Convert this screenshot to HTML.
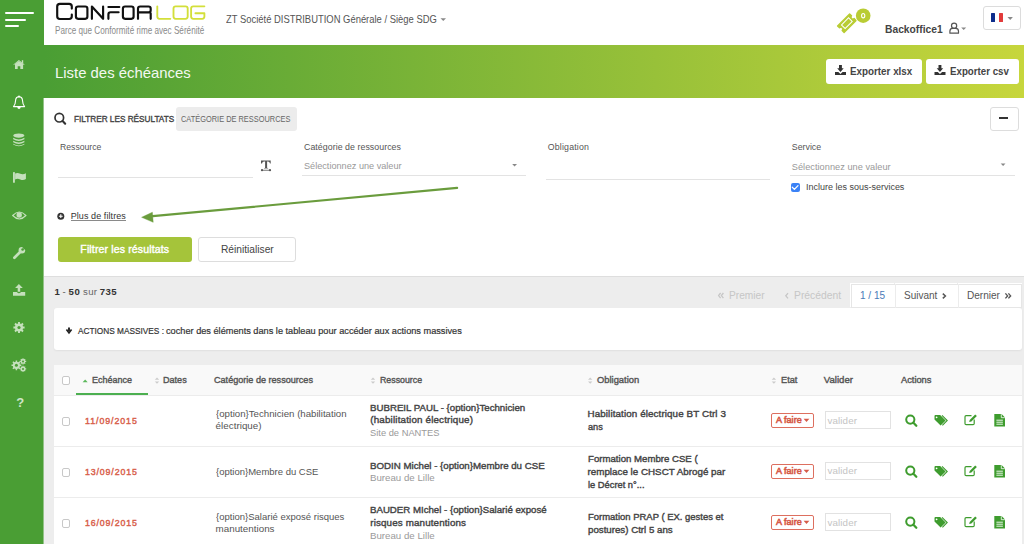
<!DOCTYPE html>
<html><head><meta charset="utf-8"><title>Liste des échéances</title>
<style>
html,body{margin:0;padding:0;width:1024px;height:544px;overflow:hidden;background:#ededed}
body{position:relative;font-family:"Liberation Sans",sans-serif}
.t{position:absolute;white-space:nowrap}
.r{position:absolute}
svg{position:absolute;overflow:visible}
</style></head><body>
<div class="r" style="left:0px;top:0px;width:1024px;height:544px;background:#ededed"></div>
<div class="r" style="left:44px;top:0px;width:980px;height:45px;background:#fff"></div>
<div class="r" style="left:0px;top:45px;width:1024px;height:53px;background:linear-gradient(90deg,#4a9e34 0px,#4a9e34 44px,#c7d63c 1024px)"></div>
<div class="r" style="left:0px;top:0px;width:43px;height:544px;background:#4a9e34"></div>
<div class="r" style="left:43px;top:0px;width:1px;height:98px;background:#4a9e34"></div>
<div class="r" style="left:43px;top:98px;width:1px;height:446px;background:rgba(74,158,52,0.55)"></div>
<div class="r" style="left:44px;top:45px;width:980px;height:53px;background:linear-gradient(90deg,#4a9e34 0%,#c7d63c 100%)"></div>
<div class="r" style="left:44px;top:98px;width:980px;height:178px;background:#fff"></div>
<div class="r" style="left:44px;top:276px;width:980px;height:1px;background:#dedede"></div>
<div class="r" style="left:850px;top:283px;width:172px;height:24px;background:#fff"></div>
<div class="r" style="left:894px;top:283px;width:1px;height:24px;background:#ececec"></div>
<div class="r" style="left:957px;top:283px;width:1px;height:24px;background:#ececec"></div>
<div class="r" style="left:54px;top:308px;width:968px;height:42px;background:#fff;border-radius:3px;box-shadow:0 1px 2px rgba(0,0,0,0.06)"></div>
<div class="r" style="left:54px;top:365px;width:968px;height:179px;background:#fff"></div>
<div class="r" style="left:54px;top:365px;width:968px;height:30px;background:#f9f9f9"></div>
<div class="r" style="left:54px;top:395px;width:968px;height:1px;background:#ececec"></div>
<div class="r" style="left:54px;top:446px;width:968px;height:1px;background:#ececec"></div>
<div class="r" style="left:54px;top:497px;width:968px;height:1px;background:#ececec"></div>
<div class="r" style="left:76px;top:393px;width:72px;height:2px;background:#4caf50"></div>
<div class="r" style="left:4.5px;top:12px;width:29.0px;height:2px;background:#fff;border-radius:1px"></div>
<div class="r" style="left:4.5px;top:18.5px;width:21.5px;height:2.0px;background:#fff;border-radius:1px"></div>
<div class="r" style="left:4.5px;top:24.5px;width:14.5px;height:2.0px;background:#fff;border-radius:1px"></div>
<div class="t" style="left:226.00px;top:14px;font-size:10.4px;line-height:11px;color:#555;transform:scaleX(0.9066);transform-origin:0 0;">ZT Société DISTRIBUTION Générale / Siège SDG</div>
<div class="t" style="left:885.00px;top:24px;font-size:10.4px;line-height:11px;color:#444;font-weight:700;transform:scaleX(0.9883);transform-origin:0 0;">Backoffice1</div>
<div class="t" style="left:54.60px;top:64px;font-size:15px;line-height:17px;color:#f3f8f0;transform:scaleX(0.9923);transform-origin:0 0;">Liste des échéances</div>
<div class="r" style="left:826px;top:59px;width:96px;height:25px;background:#fff;border-radius:3px"></div>
<div class="r" style="left:926px;top:59px;width:93px;height:25px;background:#fff;border-radius:3px"></div>
<div class="t" style="left:850.00px;top:65px;font-size:10.6px;line-height:12px;color:#444;font-weight:700;transform:scaleX(0.9276);transform-origin:0 0;">Exporter xlsx</div>
<div class="t" style="left:950.00px;top:65px;font-size:10.6px;line-height:12px;color:#444;font-weight:700;transform:scaleX(0.9171);transform-origin:0 0;">Exporter csv</div>
<div class="t" style="left:73.60px;top:113px;font-size:9.6px;line-height:11px;color:#444;transform:scaleX(0.8551);transform-origin:0 0;-webkit-text-stroke:0.4px #444;">FILTRER LES RÉSULTATS</div>
<div class="r" style="left:176px;top:107px;width:121px;height:24px;background:#ececec;border-radius:3px"></div>
<div class="t" style="left:181.30px;top:114px;font-size:9.0px;line-height:10px;color:#666;transform:scaleX(0.8234);transform-origin:0 0;">CATÉGORIE DE RESSOURCES</div>
<div class="r" style="left:990px;top:107px;width:29px;height:24px;background:#fff;border:1px solid #ddd;border-radius:3px;box-sizing:border-box"></div>
<div class="r" style="left:999px;top:116.5px;width:9px;height:2.0px;background:#333"></div>
<div class="t" style="left:59.70px;top:142px;font-size:8.8px;line-height:10px;color:#555;transform:scaleX(0.9842);transform-origin:0 0;">Ressource</div>
<div class="r" style="left:58px;top:177px;width:195px;height:1px;background:#e3e3e3"></div>
<div class="t" style="left:304.00px;top:142px;font-size:8.8px;line-height:10px;color:#555;letter-spacing:0.051px;">Catégorie de ressources</div>
<div class="t" style="left:304.00px;top:161px;font-size:9.2px;line-height:10px;color:#999;transform:scaleX(0.9949);transform-origin:0 0;">Sélectionnez une valeur</div>
<div class="r" style="left:302px;top:174.5px;width:224px;height:1.0px;background:#e3e3e3"></div>
<div class="t" style="left:547.80px;top:142px;font-size:8.8px;line-height:10px;color:#555;letter-spacing:0.164px;">Obligation</div>
<div class="r" style="left:546px;top:179px;width:224px;height:1px;background:#e3e3e3"></div>
<div class="t" style="left:791.80px;top:142px;font-size:8.8px;line-height:10px;color:#555;">Service</div>
<div class="t" style="left:791.80px;top:162px;font-size:9.2px;line-height:10px;color:#999;letter-spacing:0.036px;">Sélectionnez une valeur</div>
<div class="r" style="left:790px;top:174.5px;width:225px;height:1.0px;background:#e3e3e3"></div>
<div class="r" style="left:790.5px;top:183px;width:9.0px;height:9px;background:#3b82f6;border-radius:2px"></div>
<div class="t" style="left:805.50px;top:182px;font-size:9.2px;line-height:10px;color:#444;transform:scaleX(0.9779);transform-origin:0 0;">Inclure les sous-services</div>
<div class="t" style="left:70.70px;top:211px;font-size:9.0px;line-height:10px;color:#333;letter-spacing:0.077px;">Plus de filtres</div>
<div class="r" style="left:70.5px;top:220px;width:55.5px;height:1px;background:#8a8a8a"></div>
<div class="r" style="left:58px;top:237px;width:134px;height:25px;background:#a5c43a;border-radius:3px"></div>
<div class="t" style="left:80.30px;top:243px;font-size:10.6px;line-height:12px;color:#fff;letter-spacing:0.115px;-webkit-text-stroke:0.4px #fff;">Filtrer les résultats</div>
<div class="r" style="left:198px;top:237px;width:98px;height:25px;background:#fff;border:1px solid #ddd;border-radius:3px;box-sizing:border-box"></div>
<div class="t" style="left:220.50px;top:243px;font-size:10.6px;line-height:12px;color:#444;transform:scaleX(0.9637);transform-origin:0 0;">Réinitialiser</div>
<div class="t" style="left:54.60px;top:286px;font-size:9.6px;line-height:11px;color:#333;font-weight:700;">1</div>
<div class="t" style="left:62.50px;top:286px;font-size:9.6px;line-height:11px;color:#555;">-</div>
<div class="t" style="left:68.60px;top:286px;font-size:9.6px;line-height:11px;color:#333;font-weight:700;letter-spacing:0.525px;">50</div>
<div class="t" style="left:83.00px;top:286px;font-size:9.6px;line-height:11px;color:#666;letter-spacing:0.333px;">sur</div>
<div class="t" style="left:99.80px;top:286px;font-size:9.6px;line-height:11px;color:#333;font-weight:700;letter-spacing:0.394px;">735</div>
<div class="r" style="left:851px;top:283.5px;width:171px;height:24.0px;background:#fff;border:1px solid #e6e6e6;box-sizing:border-box"></div>
<div class="r" style="left:894.5px;top:283.5px;width:1.0px;height:24.0px;background:#ececec"></div>
<div class="r" style="left:957.5px;top:283.5px;width:1.0px;height:24.0px;background:#ececec"></div>
<div class="t" style="left:728.60px;top:290px;font-size:10.4px;line-height:11px;color:#c6c6c6;transform:scaleX(0.9777);transform-origin:0 0;">Premier</div>
<div class="t" style="left:793.90px;top:290px;font-size:10.4px;line-height:11px;color:#c6c6c6;transform:scaleX(0.9955);transform-origin:0 0;">Précédent</div>
<div class="t" style="left:859.80px;top:290px;font-size:10.4px;line-height:11px;color:#4a7ab8;transform:scaleX(0.9646);transform-origin:0 0;">1 / 15</div>
<div class="t" style="left:903.50px;top:290px;font-size:10.4px;line-height:11px;color:#555;transform:scaleX(0.9630);transform-origin:0 0;">Suivant</div>
<div class="t" style="left:967.00px;top:290px;font-size:10.4px;line-height:11px;color:#555;transform:scaleX(0.9677);transform-origin:0 0;">Dernier</div>
<svg style="left:700px;top:280px" width="324" height="30" viewBox="700 280 324 30">
<g fill="none" stroke-width="1.3" stroke-linejoin="miter">
<path d="M720.6 293 L718.6 295.6 L720.6 298.2 M723.4 293 L721.4 295.6 L723.4 298.2" stroke="#c6c6c6"/>
<path d="M788 293.2 L785.8 295.8 L788 298.4" stroke="#c6c6c6"/>
<path d="M942.8 293.6 L945.4 296 L942.8 298.4" stroke="#555" stroke-width="1.5"/>
<path d="M1005.4 293.4 L1007.6 295.9 L1005.4 298.4 M1008.4 293.4 L1010.6 295.9 L1008.4 298.4" stroke="#555" stroke-width="1.4"/>
</g>
</svg>
<div class="t" style="left:77.50px;top:325px;font-size:9.6px;line-height:11px;color:#333;transform:scaleX(0.8621);transform-origin:0 0;-webkit-text-stroke:0.2px #333;">ACTIONS MASSIVES :</div>
<div class="t" style="left:166.40px;top:325px;font-size:9.6px;line-height:11px;color:#333;transform:scaleX(0.9580);transform-origin:0 0;-webkit-text-stroke:0.2px #333;">cocher des éléments dans le tableau pour accéder aux actions massives</div>
<div class="r" style="left:61.5px;top:375.5px;width:8.5px;height:9.0px;background:#fff;border:1px solid #c8c8c8;border-radius:2px;box-sizing:border-box"></div>
<div class="t" style="left:92.20px;top:374px;font-size:9.6px;line-height:11px;color:#555;transform:scaleX(0.9344);transform-origin:0 0;-webkit-text-stroke:0.4px #555;">Echéance</div>
<div class="t" style="left:163.30px;top:374px;font-size:9.6px;line-height:11px;color:#555;transform:scaleX(0.9452);transform-origin:0 0;-webkit-text-stroke:0.4px #555;">Dates</div>
<div class="t" style="left:214.00px;top:374px;font-size:9.6px;line-height:11px;color:#555;transform:scaleX(0.9465);transform-origin:0 0;-webkit-text-stroke:0.4px #555;">Catégorie de ressources</div>
<div class="t" style="left:380.30px;top:374px;font-size:9.6px;line-height:11px;color:#555;transform:scaleX(0.9175);transform-origin:0 0;-webkit-text-stroke:0.4px #555;">Ressource</div>
<div class="t" style="left:597.10px;top:374px;font-size:9.6px;line-height:11px;color:#555;transform:scaleX(0.9762);transform-origin:0 0;-webkit-text-stroke:0.4px #555;">Obligation</div>
<div class="t" style="left:780.70px;top:374px;font-size:9.6px;line-height:11px;color:#555;transform:scaleX(0.9603);transform-origin:0 0;-webkit-text-stroke:0.4px #555;">Etat</div>
<div class="t" style="left:823.70px;top:374px;font-size:9.6px;line-height:11px;color:#555;letter-spacing:0.021px;-webkit-text-stroke:0.4px #555;">Valider</div>
<div class="t" style="left:900.60px;top:374px;font-size:9.6px;line-height:11px;color:#555;transform:scaleX(0.9657);transform-origin:0 0;-webkit-text-stroke:0.4px #555;">Actions</div>
<div class="r" style="left:61.5px;top:417px;width:8.5px;height:8.5px;background:#fff;border:1px solid #c8c8c8;border-radius:2px;box-sizing:border-box"></div>
<div class="t" style="left:85.00px;top:416px;font-size:8.8px;line-height:10px;color:#d8604b;letter-spacing:0.934px;-webkit-text-stroke:0.4px #d8604b;">11/09/2015</div>
<div class="t" style="left:215.60px;top:408px;font-size:9.8px;line-height:11px;color:#555;transform:scaleX(0.9864);transform-origin:0 0;">{option}Technicien (habilitation</div>
<div class="t" style="left:215.60px;top:420px;font-size:9.8px;line-height:11px;color:#555;letter-spacing:0.024px;">électrique)</div>
<div class="t" style="left:370.30px;top:402px;font-size:9.8px;line-height:11px;color:#444;transform:scaleX(0.9881);transform-origin:0 0;-webkit-text-stroke:0.4px #444;">BUBREIL PAUL - {option}Technicien</div>
<div class="t" style="left:370.30px;top:414px;font-size:9.8px;line-height:11px;color:#444;letter-spacing:0.171px;-webkit-text-stroke:0.4px #444;">(habilitation électrique)</div>
<div class="t" style="left:370.30px;top:427px;font-size:9.8px;line-height:11px;color:#9a9a9a;transform:scaleX(0.9523);transform-origin:0 0;">Site de NANTES</div>
<div class="t" style="left:587.50px;top:408px;font-size:9.8px;line-height:11px;color:#444;letter-spacing:0.112px;-webkit-text-stroke:0.4px #444;">Habilitation électrique BT Ctrl 3</div>
<div class="t" style="left:587.50px;top:421px;font-size:9.8px;line-height:11px;color:#444;transform:scaleX(0.9369);transform-origin:0 0;-webkit-text-stroke:0.4px #444;">ans</div>
<div class="r" style="left:771px;top:413px;width:43px;height:15px;background:#fff;border:1px solid #dd6f5f;border-radius:2px;box-sizing:border-box"></div>
<div class="t" style="left:775.50px;top:414px;font-size:9.6px;line-height:11px;color:#d65a48;transform:scaleX(0.9443);transform-origin:0 0;-webkit-text-stroke:0.6px #d65a48;">A faire</div>
<div class="r" style="left:825px;top:411px;width:66px;height:18px;background:#fff;border:1px solid #e2e2e2;box-sizing:border-box"></div>
<div class="t" style="left:827.50px;top:415px;font-size:9.8px;line-height:11px;color:#c4c4c4;letter-spacing:0.105px;">valider</div>
<div class="r" style="left:61.5px;top:468px;width:8.5px;height:8.5px;background:#fff;border:1px solid #c8c8c8;border-radius:2px;box-sizing:border-box"></div>
<div class="t" style="left:85.00px;top:467px;font-size:8.8px;line-height:10px;color:#d8604b;letter-spacing:0.862px;-webkit-text-stroke:0.4px #d8604b;">13/09/2015</div>
<div class="t" style="left:215.60px;top:466px;font-size:9.8px;line-height:11px;color:#555;transform:scaleX(0.9689);transform-origin:0 0;">{option}Membre du CSE</div>
<div class="t" style="left:370.30px;top:460px;font-size:9.8px;line-height:11px;color:#444;transform:scaleX(0.9900);transform-origin:0 0;-webkit-text-stroke:0.4px #444;">BODIN Michel - {option}Membre du CSE</div>
<div class="t" style="left:370.30px;top:472px;font-size:9.8px;line-height:11px;color:#9a9a9a;transform:scaleX(0.9897);transform-origin:0 0;">Bureau de Lille</div>
<div class="t" style="left:587.50px;top:453px;font-size:9.8px;line-height:11px;color:#444;transform:scaleX(0.9826);transform-origin:0 0;-webkit-text-stroke:0.4px #444;">Formation Membre CSE (</div>
<div class="t" style="left:587.50px;top:466px;font-size:9.8px;line-height:11px;color:#444;letter-spacing:0.006px;-webkit-text-stroke:0.4px #444;">remplace le CHSCT Abrogé par</div>
<div class="t" style="left:587.50px;top:479px;font-size:9.8px;line-height:11px;color:#444;transform:scaleX(0.9500);transform-origin:0 0;-webkit-text-stroke:0.4px #444;">le Décret n°...</div>
<div class="r" style="left:771px;top:464px;width:43px;height:15px;background:#fff;border:1px solid #dd6f5f;border-radius:2px;box-sizing:border-box"></div>
<div class="t" style="left:775.50px;top:465px;font-size:9.6px;line-height:11px;color:#d65a48;transform:scaleX(0.9443);transform-origin:0 0;-webkit-text-stroke:0.6px #d65a48;">A faire</div>
<div class="r" style="left:825px;top:462px;width:66px;height:18px;background:#fff;border:1px solid #e2e2e2;box-sizing:border-box"></div>
<div class="t" style="left:827.50px;top:465px;font-size:9.8px;line-height:11px;color:#c4c4c4;letter-spacing:0.105px;">valider</div>
<div class="r" style="left:61.5px;top:519px;width:8.5px;height:8.5px;background:#fff;border:1px solid #c8c8c8;border-radius:2px;box-sizing:border-box"></div>
<div class="t" style="left:85.00px;top:518px;font-size:8.8px;line-height:10px;color:#d8604b;letter-spacing:0.862px;-webkit-text-stroke:0.4px #d8604b;">16/09/2015</div>
<div class="t" style="left:215.60px;top:511px;font-size:9.8px;line-height:11px;color:#555;transform:scaleX(0.9699);transform-origin:0 0;">{option}Salarié exposé risques</div>
<div class="t" style="left:215.60px;top:523px;font-size:9.8px;line-height:11px;color:#555;letter-spacing:0.006px;">manutentions</div>
<div class="t" style="left:370.30px;top:504px;font-size:9.8px;line-height:11px;color:#444;transform:scaleX(0.9860);transform-origin:0 0;-webkit-text-stroke:0.4px #444;">BAUDER MIchel - {option}Salarié exposé</div>
<div class="t" style="left:370.30px;top:517px;font-size:9.8px;line-height:11px;color:#444;letter-spacing:0.134px;-webkit-text-stroke:0.4px #444;">risques manutentions</div>
<div class="t" style="left:370.30px;top:530px;font-size:9.8px;line-height:11px;color:#9a9a9a;transform:scaleX(0.9897);transform-origin:0 0;">Bureau de Lille</div>
<div class="t" style="left:587.50px;top:511px;font-size:9.8px;line-height:11px;color:#444;transform:scaleX(0.9655);transform-origin:0 0;-webkit-text-stroke:0.4px #444;">Formation PRAP ( EX. gestes et</div>
<div class="t" style="left:587.50px;top:524px;font-size:9.8px;line-height:11px;color:#444;transform:scaleX(0.9905);transform-origin:0 0;-webkit-text-stroke:0.4px #444;">postures) Ctrl 5 ans</div>
<div class="r" style="left:771px;top:515px;width:43px;height:15px;background:#fff;border:1px solid #dd6f5f;border-radius:2px;box-sizing:border-box"></div>
<div class="t" style="left:775.50px;top:516px;font-size:9.6px;line-height:11px;color:#d65a48;transform:scaleX(0.9443);transform-origin:0 0;-webkit-text-stroke:0.6px #d65a48;">A faire</div>
<div class="r" style="left:825px;top:513px;width:66px;height:18px;background:#fff;border:1px solid #e2e2e2;box-sizing:border-box"></div>
<div class="t" style="left:827.50px;top:517px;font-size:9.8px;line-height:11px;color:#c4c4c4;letter-spacing:0.105px;">valider</div>
<svg style="left:50px;top:0px" width="160" height="24" viewBox="50 0 160 24">
<g fill="none" stroke="#111" stroke-width="2.15" stroke-linecap="round" stroke-linejoin="round">
<path d="M71.8 8.6 V6.6 Q71.8 3.9 69.1 3.9 H59.9 Q57.2 3.9 57.2 6.6 V16.3 Q57.2 19 59.9 19 H69.1 Q71.8 19 71.8 16.3 V14.6"/>
<rect x="75.9" y="6.5" width="11.5" height="12.3" rx="2.2"/>
<path d="M91.9 18.8 V6.5 L103.1 18.8 V6.5"/>
<path d="M108.4 7 H119.3 M118.6 12.2 H110.6 Q108.4 12.2 108.4 14.4 V18.8"/>
<rect x="122.9" y="6.5" width="10.7" height="12.3" rx="2.2"/>
<path d="M138 18.8 V8.7 Q138 6.5 140.2 6.5 H148.5 Q150.7 6.5 150.7 8.7 V10.2 Q150.7 12.4 148.5 12.4 H138 M150.7 13.4 V18.8"/>
</g>
<g fill="none" stroke="#d3df3a" stroke-width="1.85" stroke-linecap="round" stroke-linejoin="round">
<path d="M157.3 6.3 V16.6 Q157.3 18.8 159.5 18.8 H170.3"/>
<rect x="173.5" y="6.3" width="14.2" height="12.5" rx="2.2"/>
<path d="M204.4 6.3 H193.3 Q191.1 6.3 191.1 8.5 V16.6 Q191.1 18.8 193.3 18.8 H202.2 Q204.4 18.8 204.4 16.6 V13.2 H195.4"/>
</g>
</svg>
<div class="t" style="left:54.70px;top:23px;font-size:11.8px;line-height:14px;color:#8a8a8a;transform:scaleX(0.6898);transform-origin:0 0;">Parce que Conformité rime avec Sérénité</div>
<svg style="left:830px;top:0px" width="50" height="45" viewBox="830 0 50 45">
<g transform="translate(846.85 23.2) rotate(-45)">
<path d="M-8.5 -4.6 H8.5 V-1.9 A1.9 1.9 0 0 0 8.5 1.9 V4.6 H-8.5 V1.9 A1.9 1.9 0 0 0 -8.5 -1.9 Z" fill="#b9cc34" stroke="#b9cc34" stroke-width="1.4" stroke-linejoin="round"/>
<rect x="-5" y="-2.6" width="10" height="5.2" fill="none" stroke="#fff" stroke-width="1"/>
</g>
<circle cx="863.2" cy="15.7" r="8.1" fill="#fff"/>
<circle cx="863.2" cy="15.7" r="7.3" fill="#b9cc34"/>
<ellipse cx="863.2" cy="15.7" rx="1.6" ry="2.2" fill="none" stroke="#fff" stroke-width="1.1"/>
</svg>
<svg style="left:430px;top:10px" width="540" height="30" viewBox="430 10 540 30">
<g fill="none" stroke="#555" stroke-width="1.2">
<circle cx="954.1" cy="25.7" r="2.6"/>
<path d="M949.9 33.2 V31.2 Q949.9 28.4 952.7 28.4 H955.5 Q958.5 28.4 958.5 31.2 V33.2 Z" stroke-linejoin="round"/>
</g>
<path d="M961.2 27.4 H966.2 L963.7 29.9 Z" fill="#888"/>
<path d="M440.5 18.2 H446 L443.25 20.9 Z" fill="#888"/>
</svg>
<div class="r" style="left:983px;top:6px;width:38px;height:24px;background:#fff;border:1px solid #dcdcdc;border-radius:3px;box-sizing:border-box"></div>
<div class="r" style="left:990.8px;top:13px;width:4.400000000000091px;height:9px;background:#0d2d8c;border-radius:0.5px"></div>
<div class="r" style="left:995.2px;top:13px;width:3.7999999999999545px;height:9px;background:#fff"></div>
<div class="r" style="left:999px;top:13px;width:4.399999999999977px;height:9px;background:#e23b3b;border-radius:0.5px"></div>
<svg style="left:1000px;top:10px" width="20" height="15" viewBox="1000 10 20 15"><path d="M1007.5 17.1 H1012.9 L1010.2 20 Z" fill="#888"/></svg>
<svg style="left:0px;top:50px" width="44" height="370" viewBox="0 50 44 370">
<g fill="#c5e0bc">
<path d="M13.4 64.4 L18.9 59.9 L24.6 64.4 L24 65.1 L18.9 61 L13.9 65.1 Z"/>
<rect x="21.8" y="60.2" width="1.4" height="3.2"/>
<path d="M15 63.9 L18.9 60.9 L23.1 63.9 V69 H20.3 V66.3 H17.7 V69 H15 Z"/>
</g>
<g fill="none" stroke="#fff" stroke-width="1.1" stroke-linejoin="round">
<path d="M19 96.6 Q22.4 96.8 22.6 101 Q22.7 104.7 24.6 106.6 H13.5 Q15.4 104.7 15.5 101 Q15.7 96.8 19 96.6 Z"/>
</g>
<path d="M17.3 107 H20.7 Q20.5 109 19 109 Q17.5 109 17.3 107 Z" fill="#fff"/>
<circle cx="19" cy="96.4" r="0.9" fill="#fff"/>
<g fill="#c5e0bc">
<ellipse cx="18.8" cy="135.6" rx="5.6" ry="2.1"/>
<path d="M13.2 137.8 Q18.8 141.2 24.4 137.8 V139.2 Q18.8 142.6 13.2 139.2 Z"/>
<path d="M13.2 140.8 Q18.8 144.2 24.4 140.8 V142.2 Q18.8 145.6 13.2 142.2 Z"/>
<path d="M13.2 143.8 Q18.8 147.2 24.4 143.8 V144.6 Q18.8 147.8 13.2 144.6 Z"/>
</g>
<g fill="#c5e0bc">
<rect x="13" y="172" width="1.9" height="10.8" rx="0.6"/>
<path d="M15.1 173.6 Q17.5 172.4 20.3 173.8 Q23.2 175 25.9 173.2 V179 Q23.2 180.6 20.3 179.4 Q17.5 178.1 15.1 179.4 Z"/>
</g>
<g>
<path d="M12.7 215.5 Q19.3 208.6 25.9 215.5 Q19.3 222.4 12.7 215.5 Z" fill="none" stroke="#c5e0bc" stroke-width="1.1"/>
<circle cx="19.2" cy="215" r="2.7" fill="#c5e0bc"/>
</g>
<g fill="#c5e0bc">
<path d="M14.4 257.7 L19.9 252.2" stroke="#c5e0bc" stroke-width="2.7" stroke-linecap="round"/>
<circle cx="21.9" cy="250.2" r="3.3"/>
<path d="M22.2 247.6 L25.6 246.2 L26.4 251 Z" fill="#4a9e34"/>
<circle cx="22.6" cy="249.5" r="1.3" fill="#4a9e34"/>
</g>
<g fill="#c5e0bc">
<path d="M18.9 283.9 L22.8 287.9 H20.2 V291.8 H17.7 V287.9 H15.1 Z"/>
<path d="M13 292 H17 Q17.6 293.3 18.9 293.3 Q20.3 293.3 20.9 292 H25.2 V295.8 H13 Z"/>
</g>
<g fill="#c5e0bc">
<circle cx="16.4" cy="365.3" r="3.6"/>
<circle cx="23" cy="361.4" r="2.4"/>
<circle cx="23" cy="368.9" r="2.4"/>
</g>
<g stroke="#c5e0bc" stroke-width="1.5" stroke-linecap="butt">
<path d="M16.4 360.4 V370.2 M11.5 365.3 H21.3 M12.9 361.8 L19.9 368.8 M19.9 361.8 L12.9 368.8"/>
<path d="M23 358.2 V364.6 M19.8 361.4 H26.2 M20.8 359.2 L25.2 363.6 M25.2 359.2 L20.8 363.6" stroke-width="1.1"/>
<path d="M23 365.7 V372.1 M19.8 368.9 H26.2 M20.8 366.7 L25.2 371.1 M25.2 366.7 L20.8 371.1" stroke-width="1.1"/>
</g>
<g fill="#4a9e34">
<circle cx="16.4" cy="365.3" r="1.5"/>
<circle cx="23" cy="361.4" r="1"/>
<circle cx="23" cy="368.9" r="1"/>
</g>
</svg>
<div class="t" style="left:16.20px;top:395px;font-size:13px;line-height:15px;color:#cfe5c7;font-weight:700;">?</div>
<svg style="left:0px;top:315px" width="44" height="25" viewBox="0 315 44 25">
<g fill="#c5e0bc"><circle cx="19" cy="327.5" r="4"/></g>
<g stroke="#c5e0bc" stroke-width="1.9"><path d="M19 321.9 V333.1 M13.4 327.5 H24.6 M15 323.5 L23 331.5 M23 323.5 L15 331.5"/></g>
<circle cx="19" cy="327.5" r="1.6" fill="#4a9e34"/>
</svg>
<svg style="left:50px;top:105px" width="25" height="25" viewBox="50 105 25 25">
<circle cx="59.3" cy="117.7" r="4.3" fill="none" stroke="#333" stroke-width="1.7"/>
<path d="M62.6 121 L65.2 123.7" stroke="#333" stroke-width="2.1" stroke-linecap="round"/>
</svg>
<svg style="left:255px;top:155px" width="22" height="22" viewBox="255 155 22 22">
<g fill="#555">
<path d="M261 160.4 H270.7 V163.5 H270 Q269.6 161.6 268 161.6 H267.1 V167.4 Q267.1 168.1 268.2 168.3 V168.6 H264 V168.3 Q265.1 168.1 265.1 167.4 V161.6 H264 Q262.4 161.6 262 163.5 H261 Z"/>
<rect x="262" y="169.8" width="8" height="0.8"/>
<circle cx="262" cy="170.2" r="1.1"/>
<circle cx="270" cy="170.2" r="1.1"/>
</g>
</svg>
<svg style="left:500px;top:155px" width="520" height="20" viewBox="500 155 520 20">
<path d="M512.2 164 H517 L514.6 166.6 Z" fill="#888"/>
<path d="M1000.7 163.5 H1005.5 L1003.1 166.1 Z" fill="#888"/>
</svg>
<svg style="left:50px;top:180px" width="420" height="50" viewBox="50 180 420 50">
<path d="M792.3 187.3 L794.4 189.4 L798 185.6" fill="none" stroke="#fff" stroke-width="1.3" stroke-linecap="round" stroke-linejoin="round"/>
<circle cx="60.8" cy="216.2" r="3.5" fill="#333"/>
<path d="M60.8 214.3 V218.1 M58.9 216.2 H62.7" stroke="#fff" stroke-width="1.1"/>
<path d="M150 216.4 L457.1 187.9" stroke="#6a9c3d" stroke-width="2.2" stroke-linecap="round"/>
<path d="M141.6 217.3 L152.4 212.2 L153.2 222.3 Z" fill="#6a9c3d" stroke="#6a9c3d" stroke-width="0.4" stroke-linejoin="round"/>
</svg>
<svg style="left:830px;top:60px" width="120" height="20" viewBox="830 60 120 20">
<g fill="#333" transform="translate(0 0)">
<path d="M839 65.1 H841.9 V68.3 H843.7 L840.45 72 L837.2 68.3 H839 Z"/>
<path d="M835 72 H838.3 L840.45 74 L842.6 72 H846 V74.9 H835 Z"/>
</g></svg>
<svg style="left:830px;top:60px" width="120" height="20" viewBox="830 60 120 20">
<g fill="#333" transform="translate(99.5 0)">
<path d="M839 65.1 H841.9 V68.3 H843.7 L840.45 72 L837.2 68.3 H839 Z"/>
<path d="M835 72 H838.3 L840.45 74 L842.6 72 H846 V74.9 H835 Z"/>
</g></svg>
<svg style="left:60px;top:320px" width="20" height="20" viewBox="60 320 20 20">
<path d="M69 327.4 V331" stroke="#222" stroke-width="1.9"/>
<path d="M65.8 330 L69 334.3 L72.2 330 L70.9 328.9 L69 331.4 L67.1 328.9 Z" fill="#222"/>
</svg>
<svg style="left:50px;top:370px" width="750" height="20" viewBox="50 370 750 20">
<path d="M82.6 382.2 H87.7 L85.15 379.4 Z" fill="#5cb85c"/>
<g fill="#ccc">
<path d="M154.8 379.8 H159.2 L157 377.4 Z M154.8 381.4 H159.2 L157 383.8 Z"/>
<path d="M370.8 379.8 H375.2 L373 377.4 Z M370.8 381.4 H375.2 L373 383.8 Z"/>
<path d="M588 379.8 H592.4 L590.2 377.4 Z M588 381.4 H592.4 L590.2 383.8 Z"/>
<path d="M771.7 379.8 H776.1 L773.9 377.4 Z M771.7 381.4 H776.1 L773.9 383.8 Z"/>
</g>
</svg>
<svg style="left:800px;top:405px" width="224" height="140" viewBox="800 405 224 140">
<g transform="translate(0 0)">
<path d="M803.6 418.7 H809.4 L806.5 421.9 Z" fill="#d65a48"/>
<circle cx="910.3" cy="419.6" r="4.1" fill="none" stroke="#3e9c2e" stroke-width="2"/>
<path d="M913.4 422.8 L916.3 425.7" stroke="#3e9c2e" stroke-width="2.3" stroke-linecap="round"/>
<path d="M934.5 416 Q934.5 415.1 935.4 415.1 H940.2 L945.6 420.5 L940.6 425.5 L934.5 419.6 Z" fill="#3e9c2e"/>
<circle cx="936.6" cy="417.3" r="0.9" fill="#fff"/>
<path d="M942 415.3 L947.2 420.5 L942.4 425.3" fill="none" stroke="#3e9c2e" stroke-width="1.1"/>
<path d="M974.2 419.5 V423.5 Q974.2 424.6 973.1 424.6 H966.1 Q965 424.6 965 423.5 V416.7 Q965 415.6 966.1 415.6 H971.5" fill="none" stroke="#3e9c2e" stroke-width="1.2"/>
<path d="M969.2 422 L969.7 419.9 L975.2 414.4 L976.9 416.1 L971.4 421.6 Z" fill="#3e9c2e"/>
<path d="M994.3 414 H1001.6 L1005 417.4 V426.6 H994.3 Z" fill="#3e9c2e"/>
<path d="M1001.3 414.2 V417.7 H1004.8" fill="none" stroke="#fff" stroke-width="0.8"/>
<path d="M996.4 420.2 H1002.9 M996.4 422.2 H1002.9 M996.4 424.2 H1002.9" stroke="#fff" stroke-width="0.9"/>
</g></svg>
<svg style="left:800px;top:405px" width="224" height="140" viewBox="800 405 224 140">
<g transform="translate(0 51)">
<path d="M803.6 418.7 H809.4 L806.5 421.9 Z" fill="#d65a48"/>
<circle cx="910.3" cy="419.6" r="4.1" fill="none" stroke="#3e9c2e" stroke-width="2"/>
<path d="M913.4 422.8 L916.3 425.7" stroke="#3e9c2e" stroke-width="2.3" stroke-linecap="round"/>
<path d="M934.5 416 Q934.5 415.1 935.4 415.1 H940.2 L945.6 420.5 L940.6 425.5 L934.5 419.6 Z" fill="#3e9c2e"/>
<circle cx="936.6" cy="417.3" r="0.9" fill="#fff"/>
<path d="M942 415.3 L947.2 420.5 L942.4 425.3" fill="none" stroke="#3e9c2e" stroke-width="1.1"/>
<path d="M974.2 419.5 V423.5 Q974.2 424.6 973.1 424.6 H966.1 Q965 424.6 965 423.5 V416.7 Q965 415.6 966.1 415.6 H971.5" fill="none" stroke="#3e9c2e" stroke-width="1.2"/>
<path d="M969.2 422 L969.7 419.9 L975.2 414.4 L976.9 416.1 L971.4 421.6 Z" fill="#3e9c2e"/>
<path d="M994.3 414 H1001.6 L1005 417.4 V426.6 H994.3 Z" fill="#3e9c2e"/>
<path d="M1001.3 414.2 V417.7 H1004.8" fill="none" stroke="#fff" stroke-width="0.8"/>
<path d="M996.4 420.2 H1002.9 M996.4 422.2 H1002.9 M996.4 424.2 H1002.9" stroke="#fff" stroke-width="0.9"/>
</g></svg>
<svg style="left:800px;top:405px" width="224" height="140" viewBox="800 405 224 140">
<g transform="translate(0 102)">
<path d="M803.6 418.7 H809.4 L806.5 421.9 Z" fill="#d65a48"/>
<circle cx="910.3" cy="419.6" r="4.1" fill="none" stroke="#3e9c2e" stroke-width="2"/>
<path d="M913.4 422.8 L916.3 425.7" stroke="#3e9c2e" stroke-width="2.3" stroke-linecap="round"/>
<path d="M934.5 416 Q934.5 415.1 935.4 415.1 H940.2 L945.6 420.5 L940.6 425.5 L934.5 419.6 Z" fill="#3e9c2e"/>
<circle cx="936.6" cy="417.3" r="0.9" fill="#fff"/>
<path d="M942 415.3 L947.2 420.5 L942.4 425.3" fill="none" stroke="#3e9c2e" stroke-width="1.1"/>
<path d="M974.2 419.5 V423.5 Q974.2 424.6 973.1 424.6 H966.1 Q965 424.6 965 423.5 V416.7 Q965 415.6 966.1 415.6 H971.5" fill="none" stroke="#3e9c2e" stroke-width="1.2"/>
<path d="M969.2 422 L969.7 419.9 L975.2 414.4 L976.9 416.1 L971.4 421.6 Z" fill="#3e9c2e"/>
<path d="M994.3 414 H1001.6 L1005 417.4 V426.6 H994.3 Z" fill="#3e9c2e"/>
<path d="M1001.3 414.2 V417.7 H1004.8" fill="none" stroke="#fff" stroke-width="0.8"/>
<path d="M996.4 420.2 H1002.9 M996.4 422.2 H1002.9 M996.4 424.2 H1002.9" stroke="#fff" stroke-width="0.9"/>
</g></svg>
</body></html>
